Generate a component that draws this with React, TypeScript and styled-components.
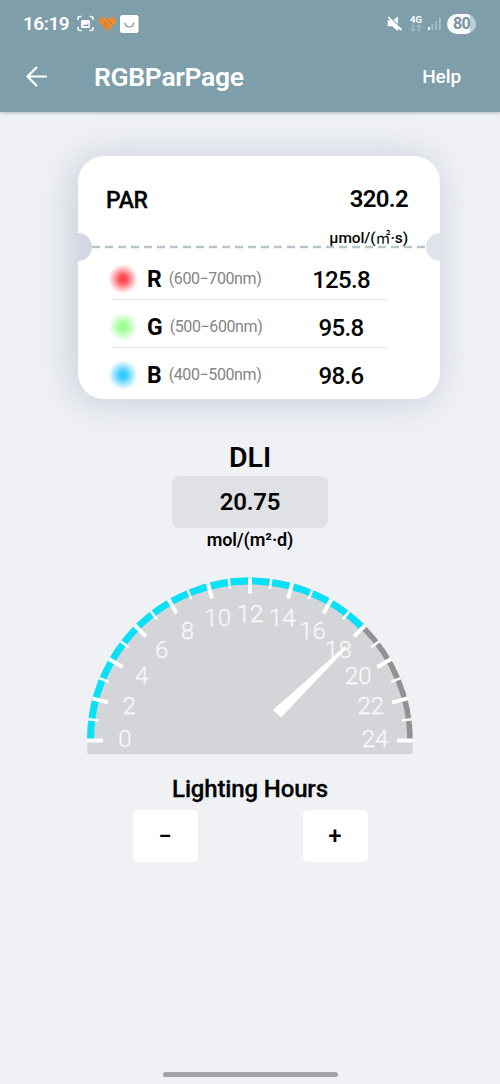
import React from "react";
import styled, { createGlobalStyle } from "styled-components";

const GlobalStyle = createGlobalStyle`
  * { box-sizing: border-box; }
  body { margin: 0; background: #eff1f5; font-family: Roboto, "Noto Sans CJK SC", sans-serif; color: #050505; }
`;

const Screen = styled.main`
  width: 500px;
  height: 1084px;
  display: flex;
  flex-direction: column;
  align-items: center;
  overflow: hidden;
  background: #eff1f5;
`;

const Header = styled.header`
  width: 100%;
  height: 112px;
  flex: none;
  background: #7e9eaa;
  color: #fff;
  box-shadow: 0 1px 3px rgba(60, 80, 100, 0.35);
`;

const StatusBar = styled.div`
  height: 47px;
  display: flex;
  align-items: center;
  padding: 0 24px 0 23px;
`;

const Clock = styled.span`
  width: 54px;
  font-size: 19px;
  font-weight: 600;
  letter-spacing: -0.5px;
  line-height: 20px;
`;

const StatusIcons = styled.svg`
  display: block;
  flex: none;
`;

const SignalIcon = styled(StatusIcons)`
  margin-left: 3px;
`;

const Network = styled.div`
  width: 16px;
  margin-left: 6px;
  display: flex;
  flex-direction: column;
  align-items: center;
  font-size: 9.5px;
  font-weight: 700;
  line-height: 9px;
`;

const Battery = styled.div`
  width: 29px;
  height: 20px;
  margin-left: 5px;
  border-radius: 10px;
  background: linear-gradient(90deg, #f7fbfc 78%, #bdced5 78%);
  color: #7794a0;
  font-size: 16px;
  font-weight: 700;
  letter-spacing: -0.6px;
  line-height: 20px;
  text-align: center;
`;

const Spacer = styled.div`
  flex: 1;
`;

const TitleBar = styled.div`
  height: 60px;
  display: flex;
  align-items: center;
  padding: 0 39px 0 25px;
`;

const Title = styled.h1`
  margin: 0 0 0 45px;
  font-size: 26.5px;
  font-weight: 600;
  letter-spacing: -0.3px;
  line-height: 30px;
`;

const Help = styled.span`
  font-size: 19px;
  font-weight: 500;
  letter-spacing: -0.1px;
  line-height: 24px;
`;

const Card = styled.section`
  position: relative;
  width: 362px;
  height: 243px;
  margin: 44px 0 0 18px;
  flex: none;
  display: flex;
  flex-direction: column;
  border-radius: 26px;
  background: #fff;
  box-shadow: -4px 2px 36px 2px rgba(130, 140, 165, 0.34);
`;

const Summary = styled.div`
  height: 96px;
  display: flex;
  justify-content: space-between;
  padding: 29px 32px 0 28px;
`;

const ParLabel = styled.span`
  margin-top: 1px;
  font-size: 23px;
  font-weight: 500;
  letter-spacing: -0.3px;
  line-height: 30px;
  -webkit-text-stroke: 0.3px;
`;

const Total = styled.div`
  display: flex;
  flex-direction: column;
  align-items: flex-end;
`;

const TotalValue = styled.span`
  font-size: 24px;
  font-weight: 600;
  letter-spacing: -0.7px;
  line-height: 28px;
`;

const TotalUnit = styled.span`
  margin-top: 15px;
  font-size: 15.5px;
  font-weight: 500;
  letter-spacing: -0.1px;
  line-height: 20px;
`;

const SquareMetre = styled.span`
  font-size: 15px;
  font-weight: 400;
`;

const Perforation = styled.svg`
  position: absolute;
  left: 0;
  top: 76px;
`;

const Band = styled.div<{ $last?: boolean }>`
  height: 48px;
  margin: 0 53px 0 35px;
  display: flex;
  align-items: center;
  border-bottom: 1.5px solid ${(p) => (p.$last ? "transparent" : "#e3e4e6")};
`;

const Glow = styled.i<{ $rgb: string }>`
  width: 30px;
  height: 30px;
  margin-left: -5px;
  margin-top: 6px;
  flex: none;
  border-radius: 50%;
  background: radial-gradient(
    closest-side,
    rgba(${(p) => p.$rgb}, 1) 0%,
    rgba(${(p) => p.$rgb}, 0.8) 30%,
    rgba(${(p) => p.$rgb}, 0.36) 65%,
    rgba(${(p) => p.$rgb}, 0) 98%
  );
`;

const BandName = styled.span`
  margin: 8px 7px 0 9px;
  font-size: 23px;
  font-weight: 700;
  line-height: 28px;
`;

const BandRange = styled.span`
  margin-top: 7px;
  color: #858585;
  font-size: 16px;
  letter-spacing: -0.4px;
  line-height: 20px;
`;

const BandValue = styled.span`
  width: 92px;
  margin: 8px 0 0 auto;
  font-size: 24px;
  font-weight: 500;
  letter-spacing: -0.7px;
  line-height: 28px;
  text-align: center;
`;

const DliTitle = styled.h2`
  margin: 42px 0 0;
  font-size: 28.5px;
  font-weight: 600;
  line-height: 34px;
`;

const DliBox = styled.div`
  width: 156px;
  height: 52px;
  margin-top: 1px;
  border-radius: 8px;
  background: #dfe1e4;
  font-size: 24px;
  font-weight: 600;
  letter-spacing: -0.2px;
  line-height: 53px;
  text-align: center;
`;

const DliUnit = styled.div`
  margin-top: 2px;
  font-size: 18px;
  font-weight: 600;
  letter-spacing: -0.1px;
  line-height: 20px;
`;

const Gauge = styled.svg`
  display: block;
  flex: none;
  margin-top: 27px;
  font-family: Roboto, sans-serif;
  font-weight: 300;
`;

const HoursTitle = styled.h3`
  margin: 20px 0 0;
  font-size: 24px;
  font-weight: 500;
  letter-spacing: -0.15px;
  line-height: 30px;
  -webkit-text-stroke: 0.3px;
`;

const Stepper = styled.div`
  width: 235px;
  margin-top: 6px;
  display: flex;
  justify-content: space-between;
`;

const StepButton = styled.button`
  width: 65px;
  height: 52px;
  padding: 0;
  border: 0;
  border-radius: 5px;
  background: #fff;
  color: #050505;
  font: 500 24px/52px Roboto, sans-serif;
`;

const HomeBar = styled.div`
  width: 175px;
  height: 5px;
  margin: auto 0 7px;
  border-radius: 3px;
  background: #a1a3a6;
`;

const bands = [
  { name: "R", range: "(600−700nm)", value: "125.8", rgb: "255, 52, 60" },
  { name: "G", range: "(500−600nm)", value: "95.8", rgb: "145, 255, 135" },
  { name: "B", range: "(400−500nm)", value: "98.6", rgb: "30, 198, 255" },
];

const CX = 163;
const CY = 163.5;

function polar(hour: number, radius: number) {
  const a = Math.PI * (1 - hour / 24);
  return { x: CX + radius * Math.cos(a), y: CY - radius * Math.sin(a) };
}

function arc(from: number, to: number, radius: number) {
  const a = polar(from, radius);
  const b = polar(to, radius);
  return `M${a.x} ${a.y}A${radius} ${radius} 0 0 1 ${b.x} ${b.y}`;
}

function HoursGauge({ hours }: { hours: number }) {
  return (
    <Gauge width="326" height="177" viewBox="0 0 326 177">
      <circle cx={CX} cy={CY} r="163" fill="#d4d5d8" />
      <path d={arc(0, hours, 159.5)} fill="none" stroke="#0ae0f6" strokeWidth="7" />
      <path d={arc(hours, 24, 160)} fill="none" stroke="#929294" strokeWidth="5.5" />
      {Array.from({ length: 25 }, (_, i) => {
        const major = i % 2 === 0;
        const a = polar(i, 163);
        const b = polar(i, major ? 147 : 153);
        return (
          <line key={i} x1={a.x} y1={a.y} x2={b.x} y2={b.y} stroke="#fff" strokeWidth={major ? 4 : 2.5} />
        );
      })}
      {Array.from({ length: 13 }, (_, i) => {
        const p = polar(i * 2, 125);
        return (
          <text
            key={i}
            x={p.x}
            y={p.y + 6.3}
            fill="#f7f7f8"
            stroke="#f7f7f8"
            strokeWidth="0.35"
            fontSize="24"
            textAnchor="middle"
          >
            {i * 2}
          </text>
        );
      })}
      <path d="M186 133L194 140.5L259 72Q260 69 257 70Z" fill="#fff" />
    </Gauge>
  );
}

export default function App() {
  return (
    <Screen>
      <GlobalStyle />
      <Header>
        <StatusBar>
          <Clock>16:19</Clock>
          <StatusIcons width="62" height="20" viewBox="77 14 62 20" fill="none">
            <path d="M78 20v-1.500q0-2 2-2h1.500M89.500 16.500H91q2 0 2 2V20M93 27v1.500q0 2-2 2h-1.500M81.500 30.500H80q-2 0-2-2V27" stroke="#fff" strokeWidth="1.500" />
            <rect x="81" y="20" width="9" height="8" rx="1.500" fill="#fff" />
            <path d="M82.500 26l2-1.500 2 .5 2-2v3z" fill="#7e9eaa" />
            <path d="M107.500 31l-7.300-7.500q-2.200-3 0-5.200 2.600-2.400 5.300-.2l2 1.900 2-1.900q2.700-2.200 5.300.2 2.200 2.200 0 5.200z" fill="#f08a2c" />
            <path d="M104 21.500l4.200 4.200M107.600 20.200l4.200 4.200M103.500 25l3.500 3.500" stroke="#9a7145" strokeWidth="1" />
            <rect x="120" y="15" width="18.500" height="18" rx="2.500" fill="#fff" />
            <path d="M125 23q.6 4 4.300 4t4.300-4" stroke="#7d8b91" strokeWidth="1.200" strokeLinecap="round" />
          </StatusIcons>
          <Spacer />
          <StatusIcons width="16" height="18" viewBox="387 15 16 18">
            <path d="M388.700 20.300l3.500-.1L403 28.900l-1 1.700-3.200-2.200v2.800l-5.500-5h-4.600zM394.500 20l4.500-3.500v7.200zM388.700 17.500l1-1L403 29.200l-1 1.500z" fill="#fff" />
          </StatusIcons>
          <Network>
            4G
            <StatusIcons width="12" height="8" viewBox="0 0 12 8" fill="none" stroke="#b4c7ce">
              <path d="M3 0v7M1 5l2 2 2-2M9 8V1M7 3l2-2 2 2" />
            </StatusIcons>
          </Network>
          <SignalIcon width="15" height="16" viewBox="0 0 15 16">
            <rect x="1" y="11" width="2" height="3" fill="#fff" />
            <path d="M4.500 8h1.700v6H4.500zM8.300 5H10v9H8.300zM12 1.500h1.700V14H12z" fill="#a9bfc7" />
          </SignalIcon>
          <Battery>80</Battery>
        </StatusBar>
        <TitleBar>
          <StatusIcons width="24" height="24" viewBox="25 65 24 24" fill="none">
            <path d="M47 76.500H27.500M37 67L27.500 76.500l9.500 9.500" stroke="#fff" strokeWidth="2.200" />
          </StatusIcons>
          <Title>RGBParPage</Title>
          <Spacer />
          <Help>Help</Help>
        </TitleBar>
      </Header>

      <Card>
        <Summary>
          <ParLabel>PAR</ParLabel>
          <Total>
            <TotalValue>320.2</TotalValue>
            <TotalUnit>
              μmol/(<SquareMetre>㎡</SquareMetre>·s)
            </TotalUnit>
          </Total>
        </Summary>
        <Perforation width="362" height="30" viewBox="0 0 362 30">
          <path d="M0 1A14 14 0 0 1 0 29z" fill="#d3d9e3" />
          <path d="M362 1A14 14 0 0 0 362 29z" fill="#e1e4eb" />
          <path d="M14 15H348" stroke="#b9c5cc" strokeWidth="2.500" strokeDasharray="8 5" />
        </Perforation>
        {bands.map((b, i) => (
          <Band key={b.name} $last={i === bands.length - 1}>
            <Glow $rgb={b.rgb} />
            <BandName>{b.name}</BandName>
            <BandRange>{b.range}</BandRange>
            <BandValue>{b.value}</BandValue>
          </Band>
        ))}
      </Card>

      <DliTitle>DLI</DliTitle>
      <DliBox>20.75</DliBox>
      <DliUnit>mol/(m²·d)</DliUnit>
      <HoursGauge hours={18} />
      <HoursTitle>Lighting Hours</HoursTitle>
      <Stepper>
        <StepButton>−</StepButton>
        <StepButton>+</StepButton>
      </Stepper>
      <HomeBar />
    </Screen>
  );
}
